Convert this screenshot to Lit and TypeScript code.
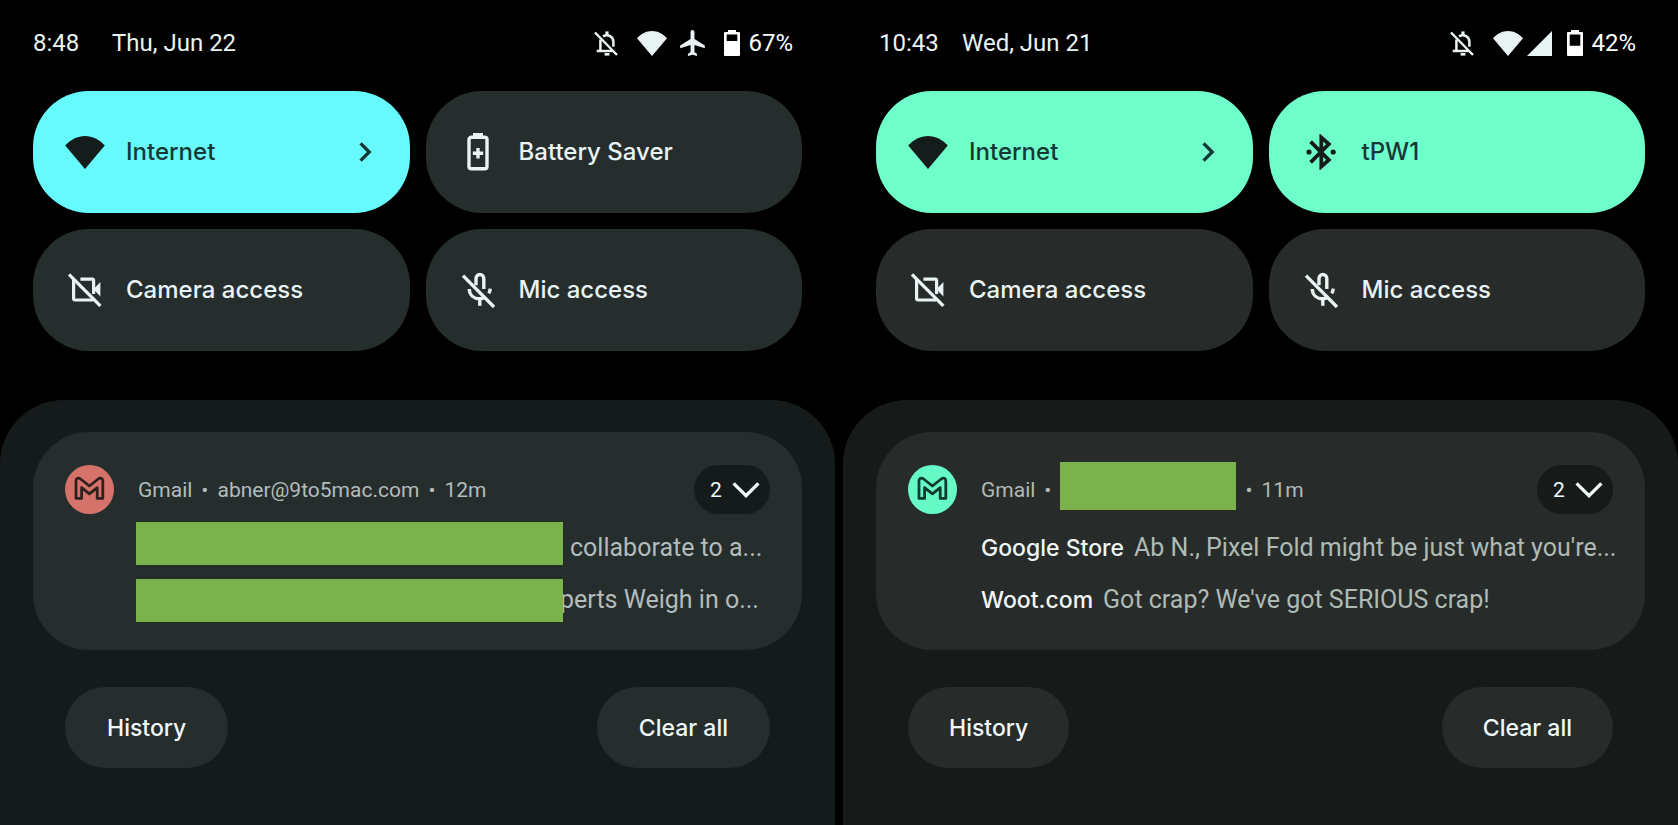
import { LitElement, html, css, svg, nothing } from "lit";
import { customElement, property } from "lit/decorators.js";
import { classMap } from "lit/directives/class-map.js";

type IconName =
  | "bell-off" | "wifi" | "airplane" | "signal" | "battery-67" | "battery-42"
  | "battery-saver" | "bluetooth" | "camera-off" | "mic-off" | "chevron-right"
  | "chevron-down" | "gmail";

interface IconShape {
  width: number;
  height: number;
  viewBox?: string;
  body: unknown;
}

const statusBattery = (windowHeight: number) => svg`
  <path fill="currentColor" fill-rule="evenodd"
    d="M4 0h8v2h3a1 1 0 0 1 1 1v22a1 1 0 0 1-1 1H1a1 1 0 0 1-1-1V3a1 1 0 0 1 1-1h3zM2.7 4.6v${windowHeight}h10.6v-${windowHeight}z"/>`;

const ICONS: Record<IconName, IconShape> = {
  "bell-off": {
    width: 24, height: 25,
    body: svg`<g fill="none" stroke="currentColor" stroke-width="2.5">
      <path d="M1 1.5 23 24"/>
      <path d="M6.4 8.5V20M2.7 20H18"/>
      <path d="M9 5.3C14 2.6 19.4 5.6 19.4 11V15.8"/>
      <path d="M13 .4V4" stroke-width="3.2"/>
      <path d="M10.6 23.3h4.8" stroke-width="2.6"/>
    </g>`,
  },
  wifi: {
    width: 30, height: 25,
    body: svg`<path fill="currentColor" d="M15 25 0 7.2C4 2.8 9.4 0 15 0s11 2.8 15 7.2z"/>`,
  },
  airplane: {
    width: 25, height: 26, viewBox: "2 2 19 20",
    body: svg`<path fill="currentColor" d="M21 16v-2l-8-5V3.5c0-.83-.67-1.5-1.5-1.5S10 2.67 10 3.5V9l-8 5v2l8-2.5V19l-2 1.5V22l3.5-1 3.5 1v-1.5L13 19v-5.5l8 2.5z"/>`,
  },
  signal: {
    width: 25, height: 25,
    body: svg`<path fill="currentColor" d="M25 0v25H0z"/>`,
  },
  "battery-67": { width: 16, height: 26, body: statusBattery(6.4) },
  "battery-42": { width: 16, height: 26, body: statusBattery(11.2) },
  "battery-saver": {
    width: 22, height: 38,
    body: svg`<path fill="currentColor" d="M6 0h10v4H6z"/>
      <rect x="2" y="4.2" width="18" height="31.6" rx="2.4" fill="none" stroke="currentColor" stroke-width="3.4"/>
      <path d="M11 15v10.4M5.8 20.2H16.2" stroke="currentColor" stroke-width="3.4"/>`,
  },
  bluetooth: {
    width: 30, height: 36,
    body: svg`<path fill="none" stroke="currentColor" stroke-width="3.8" d="M4.6 7.6 22.8 25.9 15.3 32.6V3.4L22.8 10.1 4.6 28.4"/>
      <circle cx="3" cy="18" r="2.6" fill="currentColor"/>
      <circle cx="27.2" cy="18" r="2.6" fill="currentColor"/>`,
  },
  "camera-off": {
    width: 34, height: 34,
    body: svg`<g fill="none" stroke="currentColor" stroke-width="3.2">
      <path d="M1 1.5 32.4 33"/>
      <path d="M5.6 6V25.6a1.4 1.4 0 0 0 1.4 1.4H25"/>
      <path d="M12.4 6.2H24.2a1.4 1.4 0 0 1 1.4 1.4V21"/>
    </g>
    <path fill="currentColor" d="m25.4 16.2 7-7.2v14.4z"/>`,
  },
  "mic-off": {
    width: 34, height: 36,
    body: svg`<g fill="none" stroke="currentColor" stroke-width="3.4">
      <path d="M2 3.6 33 35"/>
      <path d="M15 13.2V6.4a3.9 3.9 0 0 1 7.8 0V17"/>
      <path d="M8.2 17c.4 6.4 5 9.8 10.4 9.8 2 0 3.8-.5 5.2-1.4"/>
      <path d="M29.2 16.6c-.1 1.8-.6 3.3-1.5 4.7"/>
      <path d="M18.8 26.4v7.4"/>
    </g>`,
  },
  "chevron-right": {
    width: 13, height: 20,
    body: svg`<path fill="none" stroke="currentColor" stroke-width="3.4" d="m1.6 1.4 8.6 8.6-8.6 8.6"/>`,
  },
  "chevron-down": {
    width: 28, height: 16,
    body: svg`<path fill="none" stroke="currentColor" stroke-width="3.4" d="m1.6 1.4 12.4 12.2L26.4 1.4"/>`,
  },
  gmail: {
    width: 49, height: 49,
    body: svg`<path fill="none" stroke="currentColor" stroke-width="2.8" stroke-linejoin="round"
      d="M11 33.4V16c0-2.8 2.4-3.7 4.6-2L24.4 21l8.8-7c2.2-1.7 4.6-.8 4.6 2V33.4H32.2V22.6L24.4 28.8 16.6 22.6V33.4z"/>`,
  },
};

@customElement("sys-icon")
class SysIcon extends LitElement {
  static styles = css`
    :host { display: inline-flex; flex: none; }
    svg { display: block; }
  `;
  @property() name: IconName = "wifi";
  @property({ type: Number }) width = 0;

  render() {
    const icon = ICONS[this.name];
    const width = this.width || icon.width;
    const height = Math.round((icon.height * width) / icon.width);
    return html`<svg width=${width} height=${height}
      viewBox=${icon.viewBox ?? `0 0 ${icon.width} ${icon.height}`} aria-hidden="true">${icon.body}</svg>`;
  }
}

interface Tile {
  icon: IconName;
  iconWidth?: number;
  label: string;
  active?: boolean;
  more?: boolean;
}

interface Message {
  sender?: string;
  text: string;
  mask?: "first" | "second";
}

interface Shade {
  theme: "cyan" | "mint";
  time: string;
  date: string;
  network: IconName[];
  battery: IconName;
  level: string;
  tiles: Tile[];
  account?: string;
  age: string;
  messages: Message[];
}

const SHADES: Shade[] = [
  {
    theme: "cyan",
    time: "8:48",
    date: "Thu, Jun 22",
    network: ["wifi", "airplane"],
    battery: "battery-67",
    level: "67%",
    tiles: [
      { icon: "wifi", iconWidth: 40, label: "Internet", active: true, more: true },
      { icon: "battery-saver", label: "Battery Saver" },
      { icon: "camera-off", label: "Camera access" },
      { icon: "mic-off", label: "Mic access" },
    ],
    account: "abner@9to5mac.com",
    age: "12m",
    messages: [
      { text: "collaborate to a...", mask: "first" },
      { text: "perts Weigh in o...", mask: "second" },
    ],
  },
  {
    theme: "mint",
    time: "10:43",
    date: "Wed, Jun 21",
    network: ["wifi", "signal"],
    battery: "battery-42",
    level: "42%",
    tiles: [
      { icon: "wifi", iconWidth: 40, label: "Internet", active: true, more: true },
      { icon: "bluetooth", label: "tPW1", active: true },
      { icon: "camera-off", label: "Camera access" },
      { icon: "mic-off", label: "Mic access" },
    ],
    age: "11m",
    messages: [
      { sender: "Google Store", text: "Ab N., Pixel Fold might be just what you're..." },
      { sender: "Woot.com", text: "Got crap? We've got SERIOUS crap!" },
    ],
  },
];

@customElement("notification-shade")
class NotificationShade extends LitElement {
  static styles = css`
    :host {
      display: flex;
      min-width: 0;
    }
    * { box-sizing: border-box; }
    button {
      border: 0;
      margin: 0;
      font: inherit;
      color: inherit;
      cursor: pointer;
    }
    .screen {
      --label: Inter, "Liberation Sans", sans-serif;
      flex: 1;
      min-width: 0;
      display: flex;
      flex-direction: column;
      background: #000;
      color: #e9f3f3;
      font: 400 24px/28px Roboto, "Liberation Sans", sans-serif;
    }
    .cyan {
      --accent: #66fafe;
      --avatar: #d5726a;
      --avatar-ink: #30211f;
      --tile: #262d2d;
      --shade: #151b1b;
      --muted: #b3bcbc;
      --line: 52px;
      --action-pad: 42px;
      --status-start: 33px;
      --clock: 79px;
      --net-gap: 13px;
      --battery-gap: 19px;
    }
    .mint {
      --accent: #6effcb;
      --avatar: #66fac6;
      --avatar-ink: #0e3a30;
      --tile: #272c2b;
      --shade: #161b1a;
      --muted: #b0bab5;
      --line: 51px;
      --action-pad: 41px;
      --status-start: 36px;
      --clock: 83px;
      --net-gap: 4px;
      --battery-gap: 15px;
    }

    .status {
      display: flex;
      align-items: center;
      height: 86px;
      padding: 0 42px 0 var(--status-start);
    }
    .clock { min-width: var(--clock); }
    .date { flex: 1; }
    .network {
      display: flex;
      align-items: center;
      gap: var(--net-gap);
      margin: 0 var(--battery-gap) 0 19px;
    }
    .battery {
      display: flex;
      align-items: center;
      gap: 8px;
      color: #fff;
    }

    .tiles {
      display: grid;
      grid-template-columns: 1fr 1fr;
      gap: 16px;
      padding: 5px 33px 49px;
    }
    .tile {
      display: flex;
      align-items: center;
      gap: 21px;
      min-width: 0;
      height: 122px;
      padding: 0 38px 0 32px;
      border-radius: 56px;
      background: var(--tile);
      font: 500 24px/30px var(--label);
      text-align: left;
    }
    .tile.active {
      background: var(--accent);
      color: #153735;
    }
    .glyph {
      display: flex;
      justify-content: center;
      width: 40px;
    }
    .active .glyph { color: #151d1c; }
    .name { flex: 1; }

    .shade {
      flex: 1;
      padding: 32px 33px 56px;
      border-radius: 64px 64px 0 0;
      background: var(--shade);
    }
    .card {
      display: grid;
      grid-template-columns: 49px 1fr;
      column-gap: 24px;
      row-gap: 8px;
      padding: 33px 32px 24px;
      border-radius: 56px;
      background: var(--tile);
    }
    .avatar {
      width: 49px;
      height: 49px;
      border-radius: 50%;
      background: var(--avatar);
      color: var(--avatar-ink);
    }
    .meta {
      display: flex;
      align-items: center;
      gap: 9px;
      min-width: 0;
      font-size: 21px;
      color: var(--muted);
    }
    .count {
      display: flex;
      align-items: center;
      justify-content: space-between;
      width: 76px;
      height: 49px;
      margin-left: auto;
      padding: 0 10px 0 16px;
      border-radius: 25px;
      background: var(--shade);
      color: #f1f8f8;
    }
    .mask { background: #7bb24b; }
    .mask.account {
      align-self: flex-start;
      width: 176px;
      height: 48px;
      margin-top: -3px;
    }
    .lines {
      grid-column: 2;
      position: relative;
      min-width: 0;
      margin: 0;
      padding: 0;
      list-style: none;
    }
    .line {
      display: flex;
      align-items: baseline;
      gap: 10px;
      font-size: 25px;
      line-height: var(--line);
      color: var(--muted);
      white-space: nowrap;
    }
    .sender {
      font: 500 23px/51px var(--label);
      color: #eff6f4;
    }
    .line.first { padding-left: 432px; }
    .line.second { padding-left: 422px; }
    .line .mask {
      position: absolute;
      left: -2px;
      width: 427px;
      height: 43px;
    }
    .first .mask { top: 0; }
    .second .mask { top: 57px; }

    .actions {
      display: flex;
      justify-content: space-between;
      padding: 37px 32px 0;
    }
    .action {
      height: 81px;
      padding: 0 var(--action-pad);
      border-radius: 41px;
      background: var(--tile);
      color: #f1f8f8;
      font: 500 23px/30px var(--label);
    }
  `;

  @property({ attribute: false }) shade!: Shade;

  private renderTile(tile: Tile) {
    return html`<button type="button"
      class=${classMap({ tile: true, active: !!tile.active })}
      aria-pressed=${tile.active ? "true" : "false"}>
      <span class="glyph"><sys-icon name=${tile.icon} .width=${tile.iconWidth ?? 0}></sys-icon></span>
      <span class="name">${tile.label}</span>
      ${tile.more ? html`<sys-icon name="chevron-right"></sys-icon>` : nothing}
    </button>`;
  }

  private renderMessage(message: Message) {
    return html`<li class="line ${message.mask ?? ""}">
      ${message.sender ? html`<span class="sender">${message.sender}</span>` : nothing}
      <span>${message.text}</span>
      ${message.mask ? html`<span class="mask"></span>` : nothing}
    </li>`;
  }

  render() {
    const s = this.shade;
    return html`<section class="screen ${s.theme}">
      <header class="status">
        <span class="clock">${s.time}</span>
        <span class="date">${s.date}</span>
        <sys-icon name="bell-off"></sys-icon>
        <span class="network">${s.network.map((n) => html`<sys-icon name=${n}></sys-icon>`)}</span>
        <span class="battery"><sys-icon name=${s.battery}></sys-icon>${s.level}</span>
      </header>
      <div class="tiles">${s.tiles.map((t) => this.renderTile(t))}</div>
      <div class="shade">
        <article class="card">
          <span class="avatar"><sys-icon name="gmail"></sys-icon></span>
          <div class="meta">
            <span>Gmail</span>
            <span>•</span>
            ${s.account ? html`<span>${s.account}</span>` : html`<span class="mask account"></span>`}
            <span>•</span>
            <span>${s.age}</span>
            <button type="button" class="count" aria-label="Expand 2 notifications">
              <span>2</span><sys-icon name="chevron-down"></sys-icon>
            </button>
          </div>
          <ul class="lines">${s.messages.map((m) => this.renderMessage(m))}</ul>
        </article>
        <div class="actions">
          <button type="button" class="action">History</button>
          <button type="button" class="action">Clear all</button>
        </div>
      </div>
    </section>`;
  }
}

@customElement("app-root")
class AppRoot extends LitElement {
  static styles = css`
    :host {
      display: grid;
      grid-template-columns: 1fr 1fr;
      gap: 8px;
      min-height: 100vh;
      background: #000;
    }
  `;

  render() {
    return SHADES.map((s) => html`<notification-shade .shade=${s}></notification-shade>`);
  }
}
